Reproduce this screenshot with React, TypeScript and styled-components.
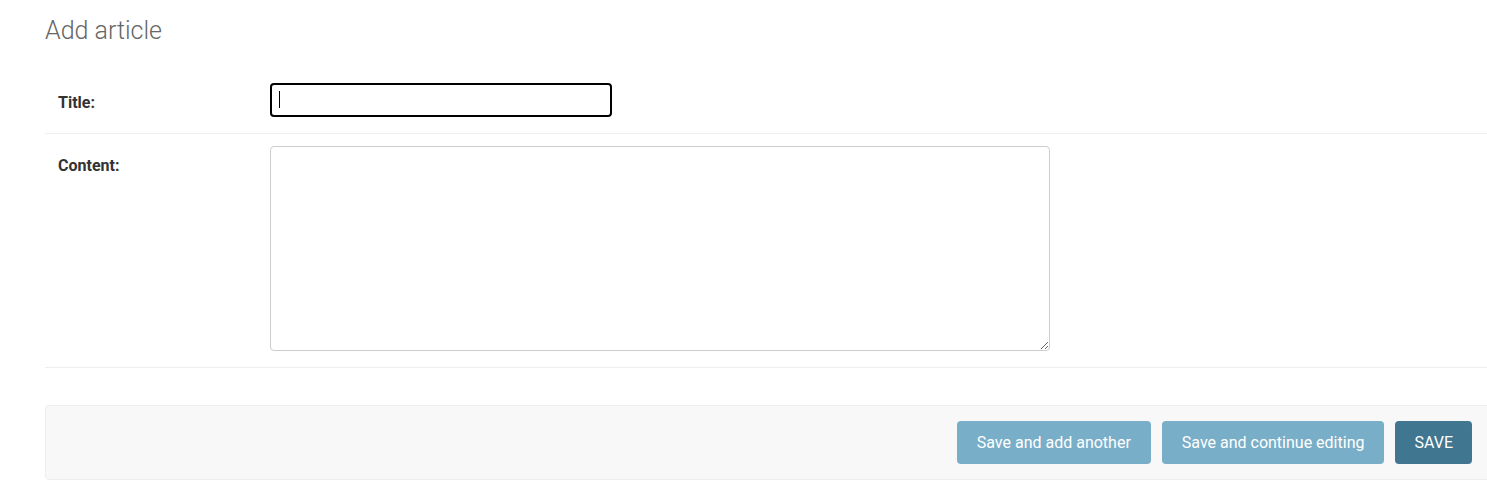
import React from "react";
import styled, { createGlobalStyle } from "styled-components";

const GlobalStyle = createGlobalStyle`
  html, body {
    margin: 0;
    padding: 0;
    background: #ffffff;
    overflow: hidden;
  }
  body {
    font-family: Roboto, "Liberation Sans", Arial, sans-serif;
    color: #333333;
  }
`;

const Content = styled.div`
  padding: 0 0 0 45px;
  width: 1470px;
`;

const Heading = styled.h1`
  margin: 0;
  padding: 15px 0 0;
  height: 71px;
  box-sizing: border-box;
  font-size: 25px;
  font-weight: 300;
  line-height: 32px;
  color: #666666;
`;

const Fieldset = styled.fieldset`
  margin: 0;
  padding: 0;
  border: none;
`;

const FormRow = styled.div`
  display: flex;
  align-items: flex-start;
  padding: 12px 0 16px;
  border-bottom: 1px solid #eeeeee;
`;

const Label = styled.label`
  flex: 0 0 212px;
  padding: 10px 0 0 13px;
  font-size: 16px;
  line-height: 20px;
  font-weight: 700;
  color: #333333;
`;

const FocusWrap = styled.span`
  position: relative;
  display: inline-block;
`;

const Caret = styled.span`
  position: absolute;
  left: 9px;
  top: 8px;
  width: 1px;
  height: 17px;
  background: #000000;
`;

const TextInput = styled.input`
  display: block;
  box-sizing: border-box;
  width: 342px;
  height: 34px;
  padding: 5px 8px;
  border: 2px solid #000000;
  border-radius: 4px;
  font: inherit;
  font-size: 15px;
  outline: none;
  background: #ffffff;
`;

const TextArea = styled.textarea`
  display: block;
  box-sizing: border-box;
  width: 780px;
  height: 205px;
  padding: 5px 6px;
  border: 1px solid #cccccc;
  border-radius: 4px;
  font: inherit;
  font-size: 15px;
  resize: both;
  background: #ffffff;
`;

const SubmitRow = styled.div`
  display: flex;
  justify-content: flex-end;
  gap: 11px;
  margin-top: 37px;
  padding: 15px 42px 15px 14px;
  background: #f8f8f8;
  border: 1px solid #eeeeee;
  border-radius: 4px;
`;

const Button = styled.button<{ $primary?: boolean }>`
  height: 43px;
  padding: 0 ${(p) => (p.$primary ? "19px" : "20px")};
  border: none;
  border-radius: 4px;
  font-family: Roboto, "Liberation Sans", Arial, sans-serif;
  font-size: 16px;
  font-weight: 400;
  color: #ffffff;
  background: ${(p) => (p.$primary ? "#417690" : "#79aec8")};
  text-transform: ${(p) => (p.$primary ? "uppercase" : "none")};
  cursor: pointer;
`;

export default function App() {
  return (
    <>
      <GlobalStyle />
      <Content>
        <Heading>Add article</Heading>
        <form>
          <Fieldset>
            <FormRow>
              <Label htmlFor="id_title">Title:</Label>
              <FocusWrap>
                <TextInput id="id_title" type="text" />
                <Caret />
              </FocusWrap>
            </FormRow>
            <FormRow>
              <Label htmlFor="id_content">Content:</Label>
              <TextArea id="id_content" />
            </FormRow>
          </Fieldset>
          <SubmitRow>
            <Button type="button">Save and add another</Button>
            <Button type="button">Save and continue editing</Button>
            <Button type="button" $primary>
              Save
            </Button>
          </SubmitRow>
        </form>
      </Content>
    </>
  );
}
